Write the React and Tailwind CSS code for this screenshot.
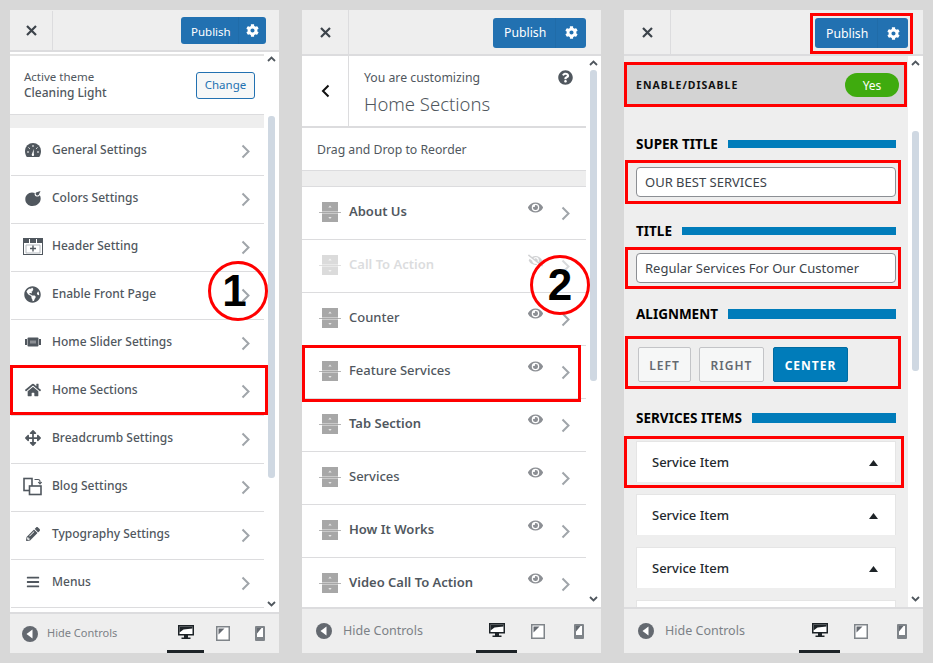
import React from 'react';
import { FaCog, FaGlobeAmericas, FaHome, FaArrowsAlt, FaPencilAlt, FaBars, FaEye, FaEyeSlash, FaQuestionCircle } from 'react-icons/fa';

function Chevron({ className = '' }) {
  return (
    <svg width="9" height="15" viewBox="0 0 9 15" fill="none" className={`shrink-0 ${className}`}>
      <path d="M1.500 1.500 7.500 7.500 1.500 13.500" stroke="#a0a5aa" strokeWidth="2" />
    </svg>
  );
}

function ScrollArrow({ down }) {
  return (
    <svg width="9" height="6" viewBox="0 0 9 6" fill="none">
      <path d={down ? 'M1 1 4.500 4.500 8 1' : 'M1 5 4.500 1.500 8 5'} stroke="#50575e" strokeWidth="1.800" />
    </svg>
  );
}

function CloseIcon() {
  return (
    <svg width="11" height="11" viewBox="0 0 11 11" fill="none">
      <path d="M1 1 10 10M10 1 1 10" stroke="#3c434a" strokeWidth="2.200" />
    </svg>
  );
}

function GaugeIcon() {
  return (
    <svg width="16" height="14" viewBox="0 0 16 14">
      <path d="M0 8a8 8 0 1 1 16 0c0 2.300-.7 4.300-1.800 6H1.800C.7 12.300 0 10.300 0 8z" fill="#50575e" />
      <path d="M8 2v2M3.500 4.500l1.300 1.200M12.500 4.500l-1.300 1.200M2 9h2M12 9h2" stroke="#fff" strokeWidth="1" />
      <path d="M8.700 6 8.800 11a1.200 1.200 0 1 1-1.800 0z" fill="#fff" />
    </svg>
  );
}

function PaletteIcon() {
  return (
    <svg width="16" height="15" viewBox="0 0 16 15">
      <path d="M7 1.500c1.200 0 2 .2 2.800.6-.6 1.400 0 3 1.700 3.400 1.400.3 2.600-.2 3.300-1.200.6 1 .9 2.100.9 3.200C15.700 11.700 12 15 7.500 15 3.300 15 .3 12 .3 8.200.3 4.500 3.200 1.500 7 1.500z" fill="#50575e" />
      <path d="M11 1.500 15.500 0 13.800 3.800a1.800 1.800 0 0 1-2.800-2.300z" fill="#50575e" />
    </svg>
  );
}

function HeaderIcon() {
  return (
    <svg width="20" height="17" viewBox="0 0 20 17" fill="none">
      <rect x="0.500" y="0.500" width="19" height="16" fill="#fff" stroke="#50575e" />
      <path d="M0 0h20v5H0z" fill="#50575e" />
      <path d="M6.500 1v4M13.500 1v4" stroke="#fff" />
      <path d="M3 7v8M17 7v8M3 7h14M3 15h14" stroke="#b4b9be" />
      <path d="M10 7.500v6M7 10.500h6" stroke="#50575e" strokeWidth="1.400" />
    </svg>
  );
}

function SliderIcon() {
  return (
    <svg width="16" height="10" viewBox="0 0 16 10">
      <path d="M0 2h2v6H0zM14 2h2v6h-2z" fill="#50575e" />
      <rect x="2.500" y="0.500" width="11" height="9" rx="1" fill="#50575e" />
      <rect x="5" y="3.500" width="6" height="3" fill="#8c8f94" />
    </svg>
  );
}

function BlogIcon() {
  return (
    <svg width="19" height="19" viewBox="0 0 19 19" fill="none">
      <rect x="1" y="1.500" width="8" height="12" fill="#fff" stroke="#50575e" strokeWidth="1.600" />
      <rect x="6.500" y="9" width="11.500" height="8.500" fill="#fff" stroke="#50575e" strokeWidth="1.600" />
      <path d="M11.500 2.500h3.500a2 2 0 0 1 2 2v2M15.200 5l1.800 2 1.800-2" stroke="#50575e" strokeWidth="1.100" />
    </svg>
  );
}

function DragIcon() {
  return (
    <svg width="22" height="20" viewBox="0 0 22 20" className="shrink-0">
      <path d="M3 0h16v20H3z" fill="#a7a7a7" />
      <path d="M3 9h16v.8H3zM3 11h16v.8H3z" fill="#d6d6d6" />
      <path d="M0 10h3v1H0zM19 10h3v1h-3z" fill="#b5b5b5" />
      <path d="M11 3.500 9.300 5.500h3.400zM11 17 9.300 15h3.400z" fill="#e6e6e6" />
    </svg>
  );
}

function HideIcon() {
  return (
    <svg width="16" height="16" viewBox="0 0 16 16" className="shrink-0">
      <circle cx="8" cy="8" r="8" fill="#646970" />
      <path d="M10.500 3.500v9L4.500 8z" fill="#fff" />
    </svg>
  );
}

function DesktopIcon() {
  return (
    <svg width="16" height="16" viewBox="0 0 16 16">
      <path d="M0 1h16v10.500H10v2h2.500V15h-9v-1.500H6v-2H0z" fill="#1d2327" />
      <path d="M1.500 2.500h13v7.500h-13z" fill="#fff" />
      <path d="M1.500 2.500h13v2l-9 1-4 3z" fill="#1d2327" />
    </svg>
  );
}

function TabletIcon() {
  return (
    <svg width="14" height="15" viewBox="0 0 14 15">
      <rect x="0.750" y="0.750" width="12.500" height="13.500" fill="#fff" stroke="#7f8489" strokeWidth="1.500" />
      <path d="M2.500 2.500h6l-6 6z" fill="#646970" />
    </svg>
  );
}

function PhoneIcon() {
  return (
    <svg width="10" height="15" viewBox="0 0 10 15">
      <rect width="10" height="15" rx="1" fill="#7f8489" />
      <rect x="2" y="2" width="6" height="9" fill="#fff" />
      <path d="M2 2h4.500L2 7.500z" fill="#646970" />
    </svg>
  );
}

function Publish({ small }) {
  return (
    <div className={`flex items-center bg-[#2271b1] text-white rounded-[3px] ${small ? 'w-[85px] h-[27px] text-[11.500px]' : 'w-[93px] h-[30px] text-[12.250px]'}`}>
      <span className={`flex-1 pt-[2px] ${small ? 'pl-[10px]' : 'pl-[11px]'}`}>Publish</span>
      <span className={`flex items-center justify-center h-full border-l border-[#206ca9] ${small ? 'w-[28px]' : 'w-[31px]'}`}>
        <FaCog size={13} />
      </span>
    </div>
  );
}

function Footer({ height, text, pad, iconGap, gaps, lineW }) {
  return (
    <div className={`flex items-center border-t-2 border-[#dcdcde] bg-[#eeeeee] shrink-0 ${height}`}>
      <div className={`flex items-center ${pad} ${iconGap}`}>
        <HideIcon />
        <span className={`text-[#7c8186] ${text}`}>Hide Controls</span>
      </div>
      <div className={`ml-auto flex h-full ${gaps}`}>
        <div className={`flex items-center justify-center h-full border-b-[3px] border-[#1d2327] ${lineW}`}><DesktopIcon /></div>
        <div className={`flex items-center justify-center h-full ${lineW}`}><TabletIcon /></div>
        <div className={`flex items-center justify-center h-full ${lineW}`}><PhoneIcon /></div>
      </div>
    </div>
  );
}

function Scrollbar({ before, height }) {
  return (
    <div className="w-[15px] shrink-0 bg-white flex flex-col items-center">
      <div className="h-[10px] flex items-center justify-center mt-[2px]"><ScrollArrow /></div>
      <div className={`w-[7px] rounded-[3px] bg-[#cfd8e2] ${before} ${height}`} />
      <div className="mt-auto mb-[5px]"><ScrollArrow down /></div>
    </div>
  );
}

const menuRows = [
  ['General Settings', <GaugeIcon />],
  ['Colors Settings', <PaletteIcon />],
  ['Header Setting', <HeaderIcon />],
  ['Enable Front Page', <FaGlobeAmericas size={17} />],
  ['Home Slider Settings', <SliderIcon />],
  ['Home Sections', <FaHome size={16} />],
  ['Breadcrumb Settings', <FaArrowsAlt size={16} />],
  ['Blog Settings', <BlogIcon />],
  ['Typography Settings', <FaPencilAlt size={14} />],
  ['Menus', <FaBars size={14} />],
];

function FirstPanel() {
  return (
    <div className="relative w-[269px] h-[643px] flex flex-col bg-white">
      <div className="flex items-center h-[42px] shrink-0 bg-[#eeeeee] border-b-2 border-[#dcdcde]">
        <div className="w-[43px] h-[39px] flex items-center justify-center border-r border-[#dcdcde]"><CloseIcon /></div>
        <div className="ml-auto mr-[13px] mt-[1px]"><Publish small /></div>
      </div>
      <div className="flex flex-1 min-h-0">
        <div className="w-[254px] overflow-hidden">
          <div className="h-[4px] border-b-2 border-[#e4e4e4]" />
          <div className="flex items-center justify-between h-[59px] pl-[14px] pr-[9px] border-b border-[#dcdcde]">
            <div className="text-[11.500px] leading-[16px] text-[#50575e]">
              <div>Active theme</div>
              <div className="text-[12px] font-medium">Cleaning Light</div>
            </div>
            <div className="w-[59px] h-[27px] flex items-center justify-center border border-[#2271b1] rounded-[3px] bg-[#f6f7f7] text-[#2271b1] text-[11.500px]">Change</div>
          </div>
          <div className="h-[13px] bg-[#eeeeee]" />
          {menuRows.map(([label, icon]) => (
            <div key={label} className="flex items-center h-[48px] ml-px border-b border-[#dcdcde] text-[#50575e]">
              <span className="w-[41px] flex justify-center pl-[2px] pb-[3px] text-[#50575e]">{icon}</span>
              <span className="text-[12px] font-medium pb-[4px]">{label}</span>
              <Chevron className="ml-auto mr-[14px]" />
            </div>
          ))}
        </div>
        <Scrollbar before="mt-[52px]" height="h-[362px]" />
      </div>
      <Footer height="h-[41px]" text="text-[11px]" pad="pl-[12px]" iconGap="gap-[9px]" gaps="mr-[1px]" lineW="w-[37px]" />
      <div className="absolute left-0 top-[355px] w-[258px] h-[50px] border-[3px] border-[#ff0000]" />
      <div className="absolute left-[198px] top-[251px] w-[60px] h-[60px] rounded-full border-[3px] border-[#ff0000] flex items-center justify-center pr-[7px] font-['Liberation_Sans'] font-bold text-[44px] text-black">1</div>
    </div>
  );
}

const sectionRows = ['About Us', 'Call To Action', 'Counter', 'Feature Services', 'Tab Section', 'Services', 'How It Works', 'Video Call To Action'];
const widerLabels = ['About Us', 'Call To Action', 'Tab Section', 'How It Works', 'Video Call To Action'];

function SecondPanel() {
  return (
    <div className="relative w-[299px] h-[643px] flex flex-col bg-white">
      <div className="flex items-center h-[46px] shrink-0 bg-[#eeeeee] border-b-2 border-[#dcdcde]">
        <div className="w-[47px] h-full flex items-center justify-center border-r border-[#dcdcde]"><CloseIcon /></div>
        <div className="ml-auto mr-[15px] mt-[1px]"><Publish /></div>
      </div>
      <div className="flex flex-1 min-h-0">
        <div className="w-[284px] overflow-hidden">
          <div className="flex h-[72px] border-b-2 border-[#dcdcde]">
            <div className="w-[47px] h-full flex items-center justify-center border-r border-[#dcdcde]">
              <svg width="9" height="14" viewBox="0 0 9 14" fill="none"><path d="M7.500 1.500 2 7l5.500 5.500" stroke="#111" strokeWidth="2" /></svg>
            </div>
            <div className="relative flex-1 pl-[15px] pt-[14px] text-[#50575e]">
              <div className="text-[12.250px] leading-[16px]">You are customizing</div>
              <div className="text-[18.500px] font-light leading-[26px] mt-[5px]">Home Sections</div>
              <FaQuestionCircle size={15} className="absolute right-[13px] top-[14px] text-[#50575e]" />
            </div>
          </div>
          <div className="h-[43px] flex items-center pl-[15px] pt-[2px] text-[12.250px] text-[#50575e] border-b border-[#dcdcde]">Drag and Drop to Reorder</div>
          <div className="h-[16px] bg-[#eeeeee] border-b border-[#dcdcde]" />
          {sectionRows.map((label) => {
            const hidden = label === 'Call To Action';
            return (
              <div key={label} className="flex items-center h-[53px] border-b border-[#dcdcde]">
                <div className={`flex items-center flex-1 ${hidden ? 'opacity-40' : ''}`}>
                  <span className="ml-[17px] pb-[3px]"><DragIcon /></span>
                  <span className={`ml-[8px] pb-[2px] text-[13px] ${widerLabels.includes(label) ? 'font-semibold' : 'font-medium'} ${hidden ? 'text-[#a7aaad]' : 'text-[#50575e]'}`}>{label}</span>
                  <span className="ml-auto mr-[18px] pb-[12px] text-[#8c8f94]">
                    {hidden ? <FaEyeSlash size={15} /> : <FaEye size={15} />}
                  </span>
                  <Chevron className="mr-[16px]" />
                </div>
              </div>
            );
          })}
        </div>
        <Scrollbar before="mt-[2px]" height="h-[311px]" />
      </div>
      <Footer height="h-[46px]" text="text-[12.500px]" pad="pl-[14px]" iconGap="gap-[11px]" gaps="mr-[2px]" lineW="w-[41px]" />
      <div className="absolute left-0 top-[335px] w-[279px] h-[57px] border-[3px] border-[#ff0000]" />
      <div className="absolute left-[228px] top-[245px] w-[60px] h-[60px] rounded-full border-[3px] border-[#ff0000] flex items-center justify-center font-['Liberation_Sans'] font-bold text-[44px] text-black">2</div>
    </div>
  );
}

function Heading({ label, barH, className }) {
  return (
    <div className={`flex items-center h-[20px] ml-[12px] w-[260px] ${className}`}>
      <span className="text-[13.500px] font-bold text-black whitespace-nowrap mr-[10px]">{label}</span>
      <div className={`flex-1 bg-[#007cba] ${barH}`} />
    </div>
  );
}

function ServiceItem({ className = '' }) {
  return (
    <div className={`flex items-center justify-between h-[41px] w-[260px] bg-white border border-b-0 border-[#e5e5e5] pl-[15px] pr-[17px] pt-[2px] text-[13px] font-medium text-[#23282d] ${className}`}>
      <span>Service Item</span>
      <svg width="9" height="6" viewBox="0 0 9 6"><path d="M4.500 0 9 6H0z" fill="#1d2327" /></svg>
    </div>
  );
}

function TextBox({ value }) {
  return (
    <div className="h-[30px] w-[260px] flex items-center bg-white border border-[#8c8f94] rounded-[4px] pl-[8px] pt-[2px] text-[13px] text-[#3c434a]">{value}</div>
  );
}

function ThirdPanel() {
  return (
    <div className="w-[299px] h-[643px] flex flex-col bg-white">
      <div className="flex items-center h-[46px] shrink-0 bg-[#eeeeee] border-b-2 border-[#dcdcde]">
        <div className="w-[47px] h-full flex items-center justify-center border-r border-[#dcdcde]"><CloseIcon /></div>
        <div className="ml-auto mr-[10px] mt-[2px] w-[103px] h-[41px] border-[3px] border-[#ff0000] flex items-center justify-center"><Publish /></div>
      </div>
      <div className="flex flex-1 min-h-0">
        <div className="w-[284px] overflow-hidden bg-[#eeeeee] pt-[6px]">
          <div className="flex items-center justify-between w-[283px] h-[45px] bg-[#d3d3d3] border-[3px] border-[#ff0000] pl-[9px] pr-[5px]">
            <span className="text-[10.500px] font-bold tracking-[1px] text-[#111] pt-[3px]">ENABLE/DISABLE</span>
            <span className="w-[54px] h-[24px] rounded-full bg-[#3fab0e] text-white text-[12px] flex items-center justify-center pt-[2px]">Yes</span>
          </div>
          <Heading label="SUPER TITLE" barH="h-[8px]" className="mt-[27px]" />
          <div className="ml-px mt-[6px] w-[276px] h-[44px] border-[3px] border-[#ff0000] pl-[8px] pt-[4px]"><TextBox value="OUR BEST SERVICES" /></div>
          <Heading label="TITLE" barH="h-[8px]" className="mt-[17px]" />
          <div className="ml-px mt-[6px] w-[276px] h-[42px] border-[3px] border-[#ff0000] pl-[8px] pt-[3px]"><TextBox value="Regular Services For Our Customer" /></div>
          <Heading label="ALIGNMENT" barH="h-[10px]" className="mt-[15px]" />
          <div className="ml-px mt-[12px] w-[276px] h-[53px] border-[3px] border-[#ff0000] pl-[10px] pt-[8px] flex text-[12px] font-semibold tracking-[1px]">
            <div className="w-[53px] h-[35px] flex items-center justify-center pt-[2px] bg-[#f6f7f7] border border-[#c3c4c7] rounded-[2px] text-[#646970]">LEFT</div>
            <div className="ml-[8px] w-[65px] h-[35px] flex items-center justify-center pt-[2px] bg-[#f6f7f7] border border-[#c3c4c7] rounded-[2px] text-[#646970]">RIGHT</div>
            <div className="ml-[9px] w-[75px] h-[35px] flex items-center justify-center pt-[2px] bg-[#007cba] border border-[#006ba1] rounded-[2px] text-white font-bold">CENTER</div>
          </div>
          <Heading label="SERVICES ITEMS" barH="h-[10px]" className="mt-[19px]" />
          <div className="mt-[8px] w-[280px] h-[52px] border-[3px] border-[#ff0000] pl-[9px] pt-[2px]"><ServiceItem /></div>
          <ServiceItem className="ml-[12px] mt-[6px]" />
          <ServiceItem className="ml-[12px] mt-[12px]" />
          <div className="ml-[12px] mt-[12px] h-[41px] w-[260px] bg-white border border-[#e5e5e5]" />
        </div>
        <Scrollbar before="mt-[63px]" height="h-[240px]" />
      </div>
      <Footer height="h-[46px]" text="text-[12.500px]" pad="pl-[14px]" iconGap="gap-[11px]" gaps="mr-[1px]" lineW="w-[41px]" />
    </div>
  );
}

export default function App() {
  return (
    <div className="w-[933px] h-[663px] bg-[#d8d8d8] p-[10px] flex gap-[23px] font-['Noto_Sans',sans-serif] overflow-hidden">
      <FirstPanel />
      <SecondPanel />
      <ThirdPanel />
    </div>
  );
}
